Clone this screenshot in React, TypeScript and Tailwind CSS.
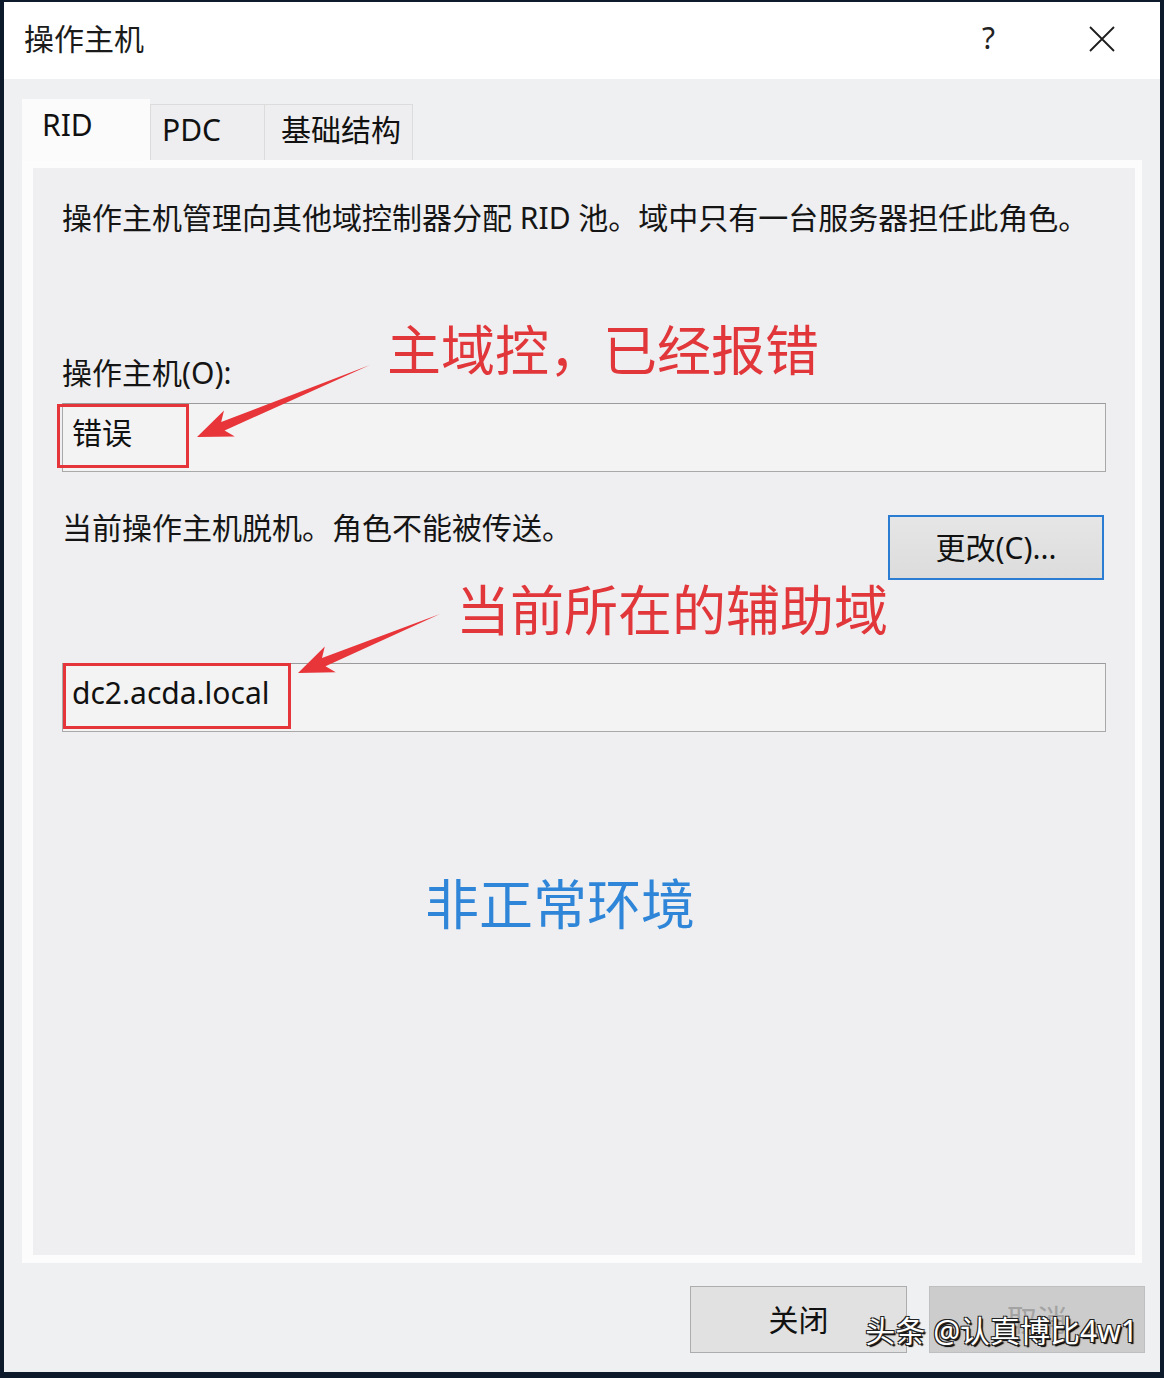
import React from 'react';

const font = { fontFamily: '"Noto Sans", "Noto Sans CJK SC", sans-serif' };

function Arrows() {
  // red annotation arrows and boxes drawn over the dialog
  return (
    <svg className="absolute left-0 top-0 pointer-events-none" width="1164" height="1378" viewBox="0 0 1164 1378">
      <rect x="58.5" y="405.5" width="129" height="61" fill="none" stroke="#e5343a" strokeWidth="3" />
      <rect x="64.5" y="664.5" width="225" height="63" fill="none" stroke="#e5343a" strokeWidth="3" />
      <polygon
        points="370,365 221.2,422 224,410.6 197,437 234.8,436.4 224.6,430.4"
        fill="#e8353a"
      />
      <polygon
        points="440,614 322,658 324.8,646.5 298,673 335.8,672.3 325.5,666.2"
        fill="#e8353a"
      />
    </svg>
  );
}

function TextBox({ children }: { children: React.ReactNode }) {
  return (
    <div className="h-[69px] border border-[#a9a9a9] border-t-[#9a9a9a] bg-[#f3f3f4] pl-[9px] pt-[9px] text-[30px] leading-[40px] text-[#111]">
      {children}
    </div>
  );
}

export default function App() {
  return (
    <div className="relative w-[1164px] h-[1378px] bg-[#0d1a2c] pt-[2px] pl-[4px] pr-[4px] pb-[6px]" style={font}>
      <div className="h-full flex flex-col bg-[#eff0f1]">
        {/* title bar */}
        <div className="h-[77px] bg-white flex items-center shrink-0">
          <span className="ml-[20px] text-[30px] text-[#1b1b1b] -mt-[4px]">操作主机</span>
          <span className="ml-auto text-[30px] text-[#222] mr-[94px] -mt-[6px]">?</span>
          <svg width="26" height="26" viewBox="0 0 26 26" className="mr-[45px] -mt-[4px]">
            <path d="M1 1 L25 25 M25 1 L1 25" stroke="#1d1d1d" strokeWidth="1.8" />
          </svg>
        </div>

        {/* tabs */}
        <div className="flex items-end pl-[18px] pt-[21px] h-[82px] shrink-0">
          <div className="w-[128px] h-[62px] bg-[#fbfbfb] text-[30px] text-[#111] pl-[20px] pt-[3px] relative z-10">RID</div>
          <div className="w-[115px] h-[56px] bg-[#eeeef0] border border-[#dcdcdc] border-b-0 text-[30px] text-[#111] pl-[11px] pt-[2px] mb-[1px]">PDC</div>
          <div className="w-[148px] h-[56px] bg-[#eeeef0] border border-[#dcdcdc] border-l-0 border-b-0 text-[30px] text-[#111] pl-[16px] pt-[2px] mb-[1px]">基础结构</div>
        </div>

        {/* tab panel */}
        <div className="mx-[18px] h-[1103px] bg-[#fcfcfc] -mt-[1px] p-[8px] pl-[11px] pr-[7px] shrink-0">
          <div className="h-full bg-[#efeff1] pt-[30px] pl-[29px] pr-[29px]">
            <p className="text-[30px] leading-[40px] text-[#151515]">
              操作主机管理向其他域控制器分配 RID 池。域中只有一台服务器担任此角色。
            </p>

            <div className="flex items-start mt-[84px]">
              <span className="w-[325px] mt-[31px] text-[30px] leading-[40px] text-[#151515]">操作主机(O):</span>
              <span className="text-[54px] leading-[60px] text-[#e1363a] -mt-[2px]">主域控，已经报错</span>
            </div>

            <div className="mt-[10px]">
              <TextBox>错误</TextBox>
            </div>

            <div className="flex items-start justify-between mt-[36px]">
              <span className="text-[30px] leading-[40px] text-[#151515]">当前操作主机脱机。角色不能被传送。</span>
              <button className="mt-[7px] mr-[2px] w-[216px] h-[65px] border-2 border-[#2b7cd3] bg-gradient-to-b from-[#e6e6e6] to-[#dcdcdc] text-[30px] text-[#111]">
                更改(C)...
              </button>
            </div>

            <div className="mt-[0px] ml-[394px] text-[54px] leading-[60px] text-[#e1363a]">当前所在的辅助域</div>

            <div className="mt-[23px]">
              <TextBox>dc2.acda.local</TextBox>
            </div>

            <div className="mt-[142px] ml-[363px] text-[54px] leading-[60px] text-[#2f86d8]">非正常环境</div>
          </div>
        </div>

        {/* footer buttons */}
        <div className="flex justify-end gap-[22px] pr-[15px] pt-[23px] relative">
          <button className="w-[217px] h-[67px] bg-[#e1e1e1] border border-[#adadad] text-[30px] text-[#111]">关闭</button>
          <button className="w-[216px] h-[67px] bg-[#cccccc] border border-[#bfbfbf] text-[30px] text-[#a3a3a3]">取消</button>
          <span className="absolute right-[22px] top-[50px] text-[30px] leading-[36px] text-white [text-shadow:1px_1px_0_#222,-1px_-1px_0_#222,1px_-1px_0_#222,-1px_1px_0_#222,2px_2px_1px_#000]">
            头条 @认真博比4w1
          </span>
        </div>
      </div>
      <Arrows />
    </div>
  );
}
